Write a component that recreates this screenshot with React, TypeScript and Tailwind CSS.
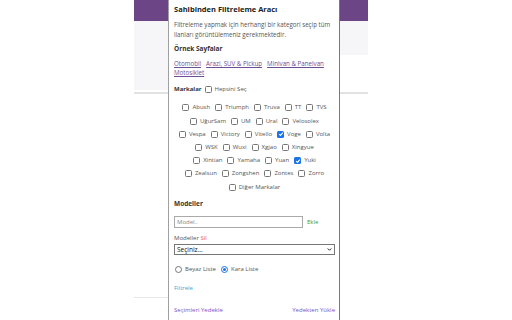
import React from "react";

const brandRows: { name: string; checked?: boolean }[][] = [
  [{ name: "Abush" }, { name: "Triumph" }, { name: "Truva" }, { name: "TT" }, { name: "TVS" }],
  [{ name: "UğurSam" }, { name: "UM" }, { name: "Ural" }, { name: "Velosolex" }],
  [{ name: "Vespa" }, { name: "Victory" }, { name: "Vitello" }, { name: "Voge", checked: true }, { name: "Volta" }],
  [{ name: "WSK" }, { name: "Wuxi" }, { name: "Xgjao" }, { name: "Xingyue" }],
  [{ name: "Xintian" }, { name: "Yamaha" }, { name: "Yuan" }, { name: "Yuki", checked: true }],
  [{ name: "Zealsun" }, { name: "Zongshen" }, { name: "Zontes" }, { name: "Zorro" }],
  [{ name: "Diğer Markalar" }],
];

function Check({ checked }: { checked?: boolean }) {
  if (checked) {
    return (
      <span className="w-[7px] h-[7px] shrink-0 rounded-[1.5px] bg-[#1a73e8] flex items-center justify-center">
        <svg viewBox="0 0 10 10" className="w-[6px] h-[6px]">
          <path d="M2 5.2 L4.2 7.3 L8 2.8" fill="none" stroke="#fff" strokeWidth="1.8" />
        </svg>
      </span>
    );
  }
  return (
    <span className="w-[7px] h-[7px] shrink-0 rounded-[1.5px] border border-[#767676] bg-white" />
  );
}

function Radio({ checked }: { checked?: boolean }) {
  if (checked) {
    return (
      <span className="w-[7px] h-[7px] shrink-0 rounded-full border-[1.5px] border-[#1a73e8] flex items-center justify-center">
        <span className="w-[3px] h-[3px] rounded-full bg-[#1a73e8]" />
      </span>
    );
  }
  return <span className="w-[7px] h-[7px] shrink-0 rounded-full border border-[#767676] bg-white" />;
}

export default function App() {
  return (
    <div
      className="w-[512px] h-[320px] bg-white flex overflow-hidden text-[#555]"
      style={{ fontFamily: '"Open Sans", "Liberation Sans", sans-serif' }}
    >
      {/* page behind the popup */}
      <div className="w-[134px] shrink-0" />
      <div className="w-[34px] shrink-0 flex flex-col">
        <div className="h-[21px] bg-[#6b4585]" />
        <div className="h-[69px] bg-[#f6f6f9]" />
        <div className="h-[2px]" />
        <div className="h-[2px] bg-[#e2e2e2]" />
        <div className="h-[203px]" />
        <div className="h-[1px] bg-[#e6e6e6]" />
      </div>

      {/* popup */}
      <div className="w-[172px] h-[320px] shrink-0 bg-white border-l border-r border-l-[#a0a0a0] border-r-[#7a7a7a] pl-[5px] pr-[4px] flex flex-col">
        <div className="mt-[4px] text-[7.5px] leading-[10px] font-bold text-[#222]">
          Sahibinden Filtreleme Aracı
        </div>
        <div className="mt-[6px] text-[6.2px] leading-[10px] text-[#555] whitespace-nowrap">
          Filtreleme yapmak için herhangi bir kategori seçip tüm
          <br />
          ilanları görüntülemeniz gerekmektedir.
        </div>
        <div className="mt-[4px] text-[6.5px] leading-[10px] font-bold text-[#333]">
          Örnek Sayfalar
        </div>
        <div className="mt-[5px] text-[6.2px] leading-[9px] text-[#6d4f96] underline">
          <div className="flex gap-[5px]">
            <a href="#">Otomobil</a>
            <a href="#">Arazi, SUV &amp; Pickup</a>
            <a href="#">Minivan &amp; Panelvan</a>
          </div>
          <div>
            <a href="#">Motosiklet</a>
          </div>
        </div>

        <div className="mt-[7px] h-[10px] flex items-center gap-[3px] text-[6px]">
          <span className="font-bold text-[#333]">Markalar</span>
          <Check />
          <span>Hepsini Seç</span>
        </div>

        <div className="mt-[7.4px] text-[6px] text-[#555]">
          {brandRows.map((row, i) => (
            <div key={i} className="h-[13.2px] flex items-center justify-center gap-[5px]">
              {row.map((b) => (
                <label key={b.name} className="flex items-center gap-[3px]">
                  <Check checked={b.checked} />
                  <span>{b.name}</span>
                </label>
              ))}
            </div>
          ))}
        </div>

        <div className="mt-[5.6px] text-[6.5px] leading-[10px] font-bold text-[#333]">
          Modeller
        </div>
        <div className="mt-[7px] h-[12px] flex items-center text-[6px]">
          <input
            placeholder="Model.."
            className="w-[129px] h-[12px] border border-[#aaa] px-[2px] text-[6px] placeholder:text-[#888] outline-none"
          />
          <span className="ml-[4px] text-[#3f9a3a]">Ekle</span>
        </div>
        <div className="mt-[5px] text-[6px] leading-[10px]">
          Modeller <span className="text-[#e35b5b]">Sil</span>
        </div>
        <div className="mt-[1px] h-[11px] border border-[#777] px-[2px] flex items-center justify-between text-[6.5px] text-[#111]">
          <span>Seçiniz...</span>
          <svg viewBox="0 0 10 10" className="w-[5px] h-[5px]">
            <path d="M1.5 3 L5 6.5 L8.5 3" fill="none" stroke="#222" strokeWidth="2" />
          </svg>
        </div>

        <div className="mt-[9.5px] h-[10px] flex items-center text-[6px]">
          <span className="ml-[1px]" />
          <Radio />
          <span className="ml-[3px]">Beyaz Liste</span>
          <span className="ml-[5px]" />
          <Radio checked />
          <span className="ml-[3px]">Kara Liste</span>
        </div>

        <div className="mt-[8px] text-[6px] leading-[10px] text-[#3aa7cf]">Filtrele</div>

        <div className="mt-[12.5px] flex justify-between text-[6px] leading-[10px] text-[#7b52c8]">
          <a href="#">Seçimleri Yedekle</a>
          <a href="#">Yedekten Yükle</a>
        </div>
      </div>

      <div className="w-[28px] shrink-0 flex flex-col">
        <div className="h-[21px] bg-[#6b4585]" />
        <div className="h-[34px] bg-[#f6f6f9]" />
        <div className="h-[37px]" />
        <div className="h-[2px] bg-[#e2e2e2]" />
      </div>
      <div className="flex-1" />
    </div>
  );
}
